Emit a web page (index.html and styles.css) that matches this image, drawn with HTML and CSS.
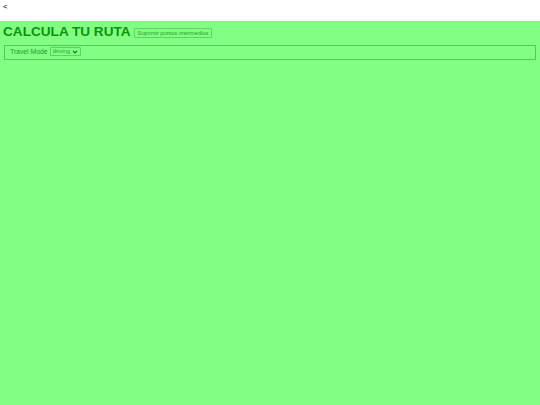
FILE: index.html
```html
<!DOCTYPE html>
<html lang="es">
<head>
    <meta charset="UTF-8">
    <meta name="viewport" content="width=device-width, initial-scale=1.0">
    <title>Calcula tu ruta</title>
    <link rel="stylesheet" href="styles.css">
</head>
<body>

    <div class="back">&lt;</div>

    <div class="page">
        <div class="header">
            <h1>CALCULA TU RUTA</h1>
            <button class="clear-btn" type="button">Suprimir puntos intermedios</button>
        </div>
        <fieldset class="options">
            <label for="mode">Travel Mode</label>
            <select id="mode">
                <option>driving</option>
                <option>walking</option>
                <option>bicycling</option>
                <option>transit</option>
            </select>
        </fieldset>
    </div>

</body>
</html>
```

FILE: styles.css
```css
body {
    margin: 0;
    font-family: "Liberation Sans", Arial, sans-serif;
    background-color: #ffffff;
}
.back {
    height: 21px;
    padding-left: 3px;
    font-size: 8px;
    line-height: 14px;
}
.page {
    background-color: #82fe82;
    min-height: 384px;
    padding: 0 4px 0 3px;
    box-sizing: border-box;
}
.header {
    display: flex;
    align-items: center;
    gap: 3px;
    height: 20px;
    padding-top: 1px;
}
.header h1 {
    margin: 0;
    font-size: 13.6px;
    line-height: 14px;
    color: #0c940c;
}
.clear-btn {
    font-family: inherit;
    font-size: 5.7px;
    color: #2a9a2a;
    background: #82fe82;
    border: 1px solid #5ed35e;
    border-radius: 1px;
    padding: 1px 3px;
    margin-top: 2px;
}
.options {
    margin: 3px 0 0 1px;
    padding: 1px 5px 3px;
    border: 1px solid #55c955;
    display: flex;
    align-items: center;
    gap: 2px;
}
.options label {
    font-size: 6.8px;
    color: #2a9a2a;
}
.options select {
    appearance: none;
    font-family: inherit;
    font-size: 6px;
    color: #2f9f2f;
    background: #82fe82 url("data:image/svg+xml,%3Csvg xmlns='http://www.w3.org/2000/svg' width='6' height='4'%3E%3Cpath d='M1 1l2 2 2-2' fill='none' stroke='%231a7d1a' stroke-width='1.2'/%3E%3C/svg%3E") no-repeat right 2px center;
    border: 1px solid #5ed35e;
    border-radius: 1px;
    width: 31px;
    height: 9px;
    padding: 0 0 0 2px;
    line-height: 7px;
}
```
